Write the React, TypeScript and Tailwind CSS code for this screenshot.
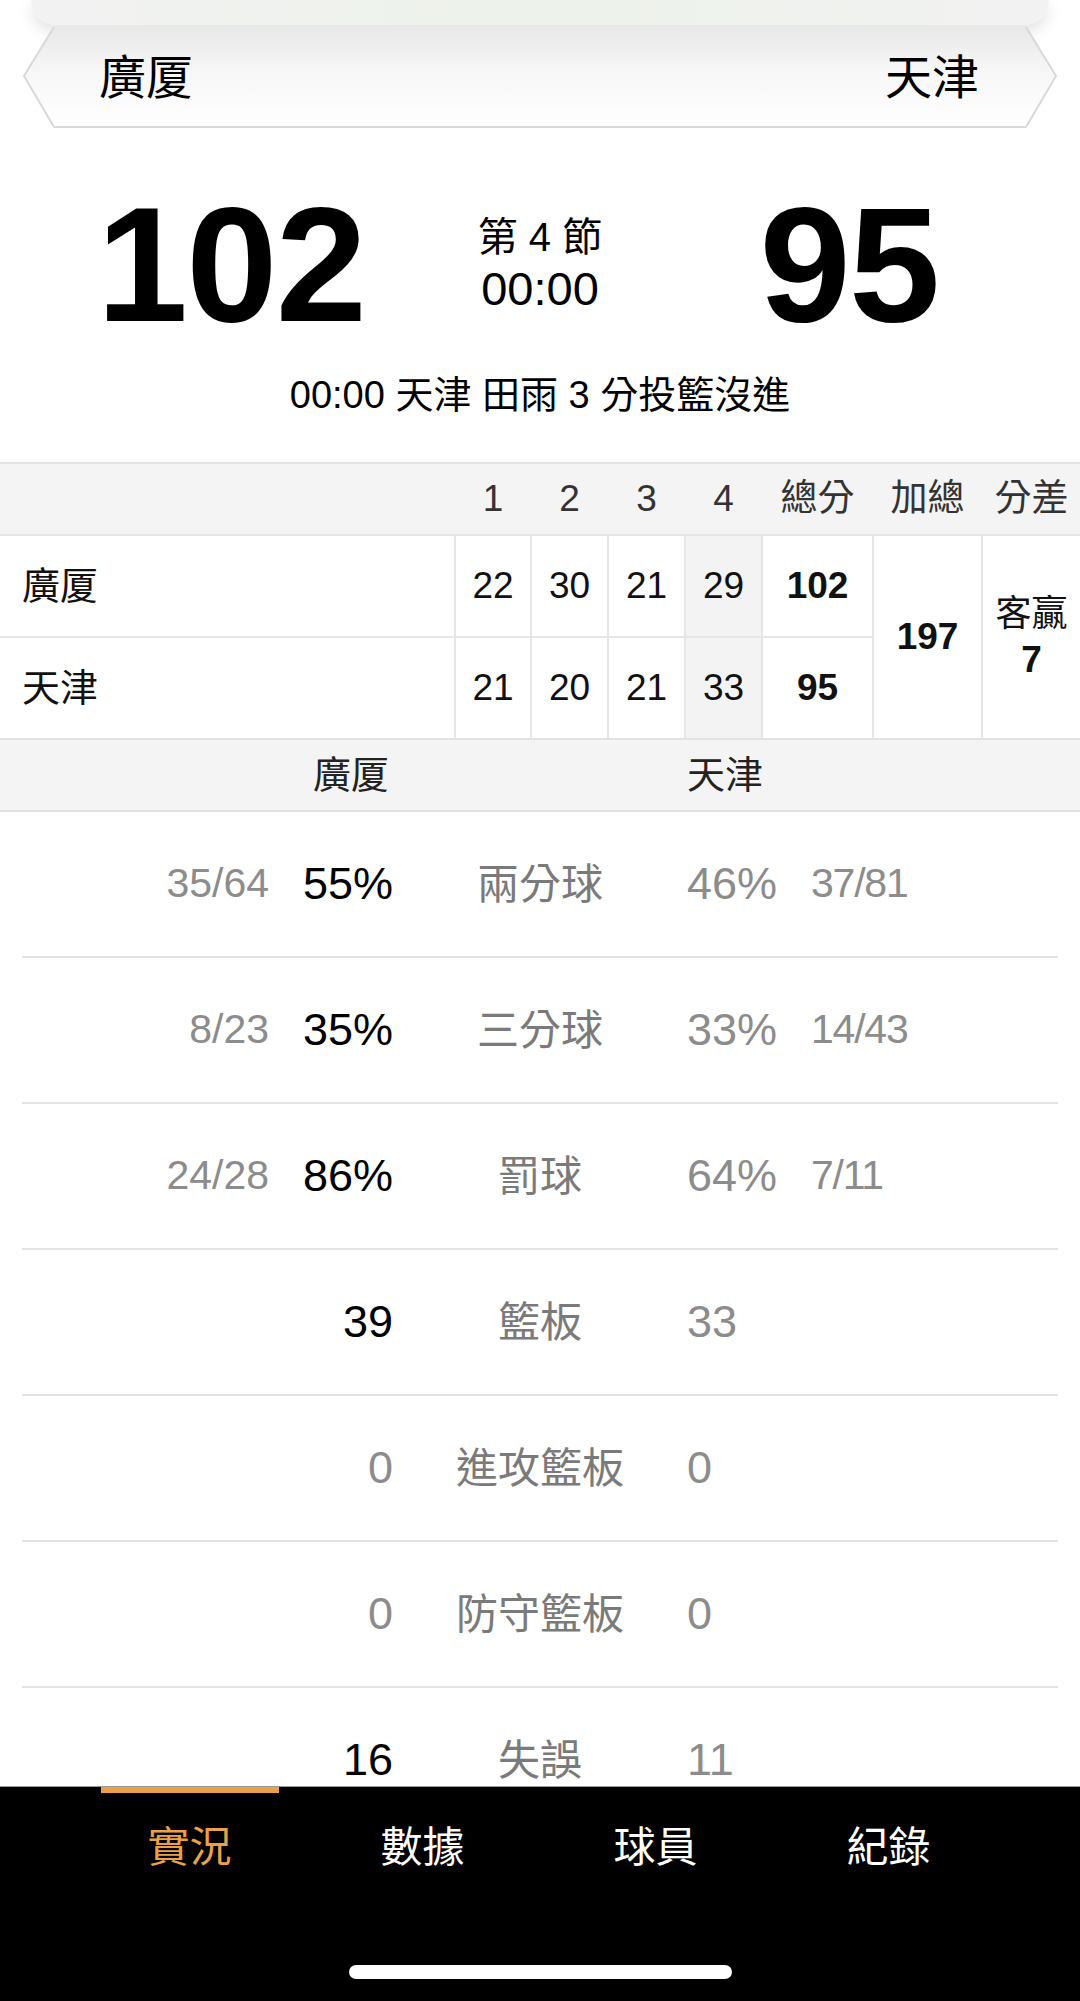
import React from "react";

type Stat = {
  lf?: string;
  lv: string;
  label: string;
  rv: string;
  rf?: string;
  lWin?: boolean;
};

const stats: Stat[] = [
  { lf: "35/64", lv: "55%", label: "兩分球", rv: "46%", rf: "37/81", lWin: true },
  { lf: "8/23", lv: "35%", label: "三分球", rv: "33%", rf: "14/43", lWin: true },
  { lf: "24/28", lv: "86%", label: "罰球", rv: "64%", rf: "7/11", lWin: true },
  { lv: "39", label: "籃板", rv: "33", lWin: true },
  { lv: "0", label: "進攻籃板", rv: "0" },
  { lv: "0", label: "防守籃板", rv: "0" },
  { lv: "16", label: "失誤", rv: "11", lWin: true },
];

const quarters = [
  { name: "廣厦", q: ["22", "30", "21", "29"], total: "102" },
  { name: "天津", q: ["21", "20", "21", "33"], total: "95" },
];

const tabs = ["實況", "數據", "球員", "紀錄"];

// same template for header + body so the labels line up with the cells
const cols = "grid grid-cols-[454px_74px_75px_75px_75px_109px_107px_97px] gap-x-[2px]";

function TeamBar() {
  return (
    <div className="relative mt-[2px] h-[101px]">
      {/* hexagon plate */}
      <svg className="absolute inset-0" width="1080" height="101" viewBox="0 0 1080 101">
        <defs>
          <linearGradient id="plate" x1="0" y1="0" x2="0" y2="1">
            <stop offset="0" stopColor="#e8e8e8" />
            <stop offset="0.45" stopColor="#f7f7f7" />
            <stop offset="1" stopColor="#ffffff" />
          </linearGradient>
        </defs>
        <polygon points="54,0 1026,0 1056,49 1026,100 54,100 24,49" fill="url(#plate)" />
        <polyline
          points="54,0 24,49 54,100 1026,100 1056,49 1026,0"
          fill="none"
          stroke="#d9d9d9"
          strokeWidth="2"
        />
      </svg>
      <div className="relative flex h-full items-center justify-between pl-[99px] pr-[101px] text-[47px] leading-none text-black">
        <span>廣厦</span>
        <span>天津</span>
      </div>
    </div>
  );
}

function Scoreboard() {
  return (
    <>
      <div className="mt-[55px] grid grid-cols-[462px_156px_462px] items-center">
        <div className="text-center text-[164px] font-bold leading-none tracking-[-0.01em] text-black">
          102
        </div>
        <div className="-mt-[4px] flex flex-col items-center leading-[52px] text-black">
          <span className="text-[40px]">第 4 節</span>
          <span className="text-[47px]">00:00</span>
        </div>
        <div className="text-center text-[164px] font-bold leading-none tracking-[-0.01em] text-black">
          95
        </div>
      </div>
      <div className="mt-[26px] text-center text-[38px] leading-[44px] text-black">
        00:00 天津 田雨 3 分投籃沒進
      </div>
    </>
  );
}

function QuarterTable() {
  return (
    <div className="mt-[45px] border-t-2 border-[#e2e2e2]">
      {/* header */}
      <div className={`${cols} h-[70px] items-center bg-[#f4f4f4] text-[37px] text-[#333]`}>
        <span />
        <span className="text-center">1</span>
        <span className="text-center">2</span>
        <span className="text-center">3</span>
        <span className="text-center">4</span>
        <span className="text-center">總分</span>
        <span className="text-center">加總</span>
        <span className="text-center">分差</span>
      </div>

      {/* body */}
      <div
        className={`${cols} grid-rows-[100px_100px] gap-y-[2px] border-t-2 border-[#e6e6e6] bg-[#e6e6e6] text-[37px] text-[#111]`}
      >
        {quarters.map((t, i) => (
          <React.Fragment key={t.name}>
            <div className="flex items-center bg-white pl-[22px] text-[38px]">{t.name}</div>
            {t.q.map((v, j) => (
              <div
                key={j}
                className={`flex items-center justify-center ${j === 3 ? "bg-[#f3f3f3]" : "bg-white"}`}
              >
                {v}
              </div>
            ))}
            <div className="flex items-center justify-center bg-white font-bold">{t.total}</div>
            {i === 0 && (
              <>
                <div className="row-span-2 flex items-center justify-center bg-white font-bold">197</div>
                <div className="row-span-2 flex flex-col items-center justify-center bg-white leading-[46px]">
                  <span className="text-[36px]">客贏</span>
                  <span className="font-bold">7</span>
                </div>
              </>
            )}
          </React.Fragment>
        ))}
      </div>

      {/* team sub-header */}
      <div className="flex h-[74px] items-center border-y-2 border-[#e2e2e2] bg-[#f4f4f4] text-[38px] text-[#222]">
        <span className="ml-[291px] w-[120px] text-center">廣厦</span>
        <span className="ml-[254px] w-[120px] text-center">天津</span>
      </div>
    </div>
  );
}

function StatRows() {
  return (
    <div>
      {stats.map((s) => (
        <div key={s.label}>
          <div className="grid h-[144px] grid-cols-[269px_124px_294px_124px_1fr] items-center">
            <span className="text-right text-[41px] text-[#8c8c8c]">{s.lf}</span>
            <span className={`text-right text-[45px] ${s.lWin ? "text-black" : "text-[#8c8c8c]"}`}>
              {s.lv}
            </span>
            <span className="text-center text-[42px] text-[#7a7a7a]">{s.label}</span>
            <span className="text-[45px] text-[#8c8c8c]">{s.rv}</span>
            <span className="text-[41px] tracking-[-0.03em] text-[#8c8c8c]">{s.rf}</span>
          </div>
          <div className="mx-[22px] h-[2px] bg-[#e4e4e4]" />
        </div>
      ))}
    </div>
  );
}

function BottomNav() {
  return (
    <nav className="flex h-[215px] shrink-0 flex-col border-t border-[#9a9a9a] bg-black">
      <div className="flex px-[73px]">
        {tabs.map((t, i) => (
          <div key={t} className="flex w-[233px] flex-col items-center">
            <div className={`h-[6px] w-[178px] ${i === 0 ? "bg-[#eaa149]" : ""}`} />
            <span
              className={`mt-[30px] text-[42px] leading-[50px] ${i === 0 ? "text-[#eaa149]" : "text-white"}`}
            >
              {t}
            </span>
          </div>
        ))}
      </div>
      <div className="mx-auto mb-[22px] mt-auto h-[14px] w-[383px] rounded-full bg-white" />
    </nav>
  );
}

export default function App() {
  return (
    <div className="flex h-[2001px] w-[1080px] flex-col overflow-hidden bg-white font-['Liberation_Sans','Noto_Sans_CJK_TC',sans-serif]">
      <div className="min-h-0 flex-1 overflow-hidden">
        {/* card peeking from the previous screen */}
        <div className="mx-[31px] h-[25px] rounded-b-[28px] bg-gradient-to-r from-[#f2f2f2] via-[#edf2ea] to-[#f2f2f2] shadow-[0_6px_16px_rgba(0,0,0,0.12)]" />
        <TeamBar />
        <Scoreboard />
        <QuarterTable />
        <StatRows />
      </div>
      <BottomNav />
    </div>
  );
}
